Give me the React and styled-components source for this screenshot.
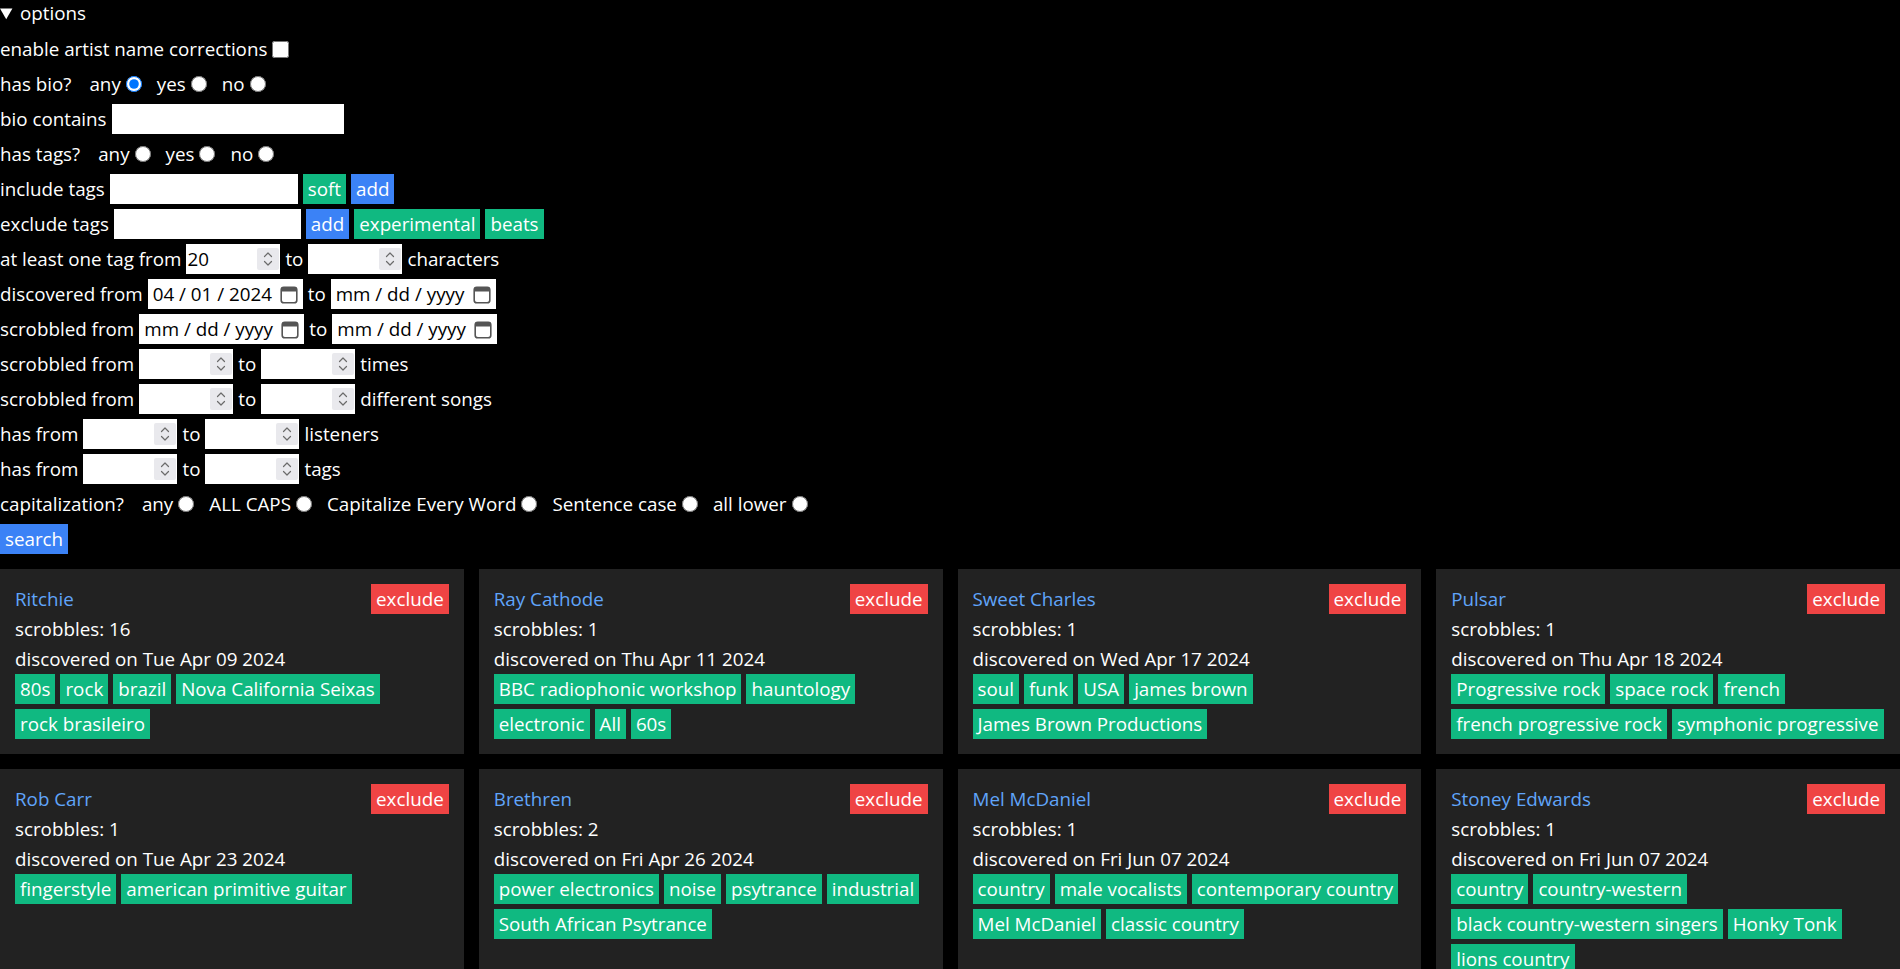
import styled, { createGlobalStyle } from 'styled-components'

const GlobalStyle = createGlobalStyle`
  html, body {
    margin: 0;
    padding: 0;
    background: #000;
  }
  body {
    color: #fff;
    font-family: "Open Sans", "Noto Sans", sans-serif;
    font-size: 18.8px;
  }
  * {
    box-sizing: border-box;
  }
`

const tones = {
  green: '#10b981',
  blue: '#3b82f6',
  red: '#ef4444',
}

const Options = styled.details`
  margin: 0;
`

const Summary = styled.summary`
  height: 29px;
  line-height: 27px;
  cursor: pointer;
`

const Form = styled.div`
  display: flex;
  flex-direction: column;
  gap: 5px;
  padding-top: 5px;
`

const Row = styled.div`
  display: flex;
  align-items: center;
  gap: 5px;
  height: 30px;
  white-space: nowrap;
`

const Question = styled.span`
  margin-right: 3px;
`

const Choice = styled.label`
  display: flex;
  align-items: center;
  gap: 5px;
  margin-left: 10px;
`

const Radio = styled.input.attrs({ type: 'radio' })`
  width: 16px;
  height: 16px;
  margin: 0;
`

const Checkbox = styled.input.attrs({ type: 'checkbox' })`
  width: 17px;
  height: 17px;
  margin: 0;
`

const TextInput = styled.input`
  width: ${p => p.$w}px;
  height: 30px;
  border: 0;
  padding: 1px 3px;
  font: inherit;
  color: #000;
  background: #fff;
  outline: none;
`

const FieldBox = styled.span`
  display: inline-flex;
  align-items: center;
  width: ${p => p.$w}px;
  height: 30px;
  background: #fff;
  padding: ${p => p.$pad};
  gap: 4px;
`

const NumberInput = styled.input.attrs({ type: 'number' })`
  flex: 1;
  min-width: 0;
  height: 100%;
  border: 0;
  padding: 0;
  font: inherit;
  color: #000;
  background: transparent;
  outline: none;
  -moz-appearance: textfield;

  &::-webkit-inner-spin-button,
  &::-webkit-outer-spin-button {
    -webkit-appearance: none;
    margin: 0;
  }
`

const Spinner = styled.span`
  width: 22px;
  height: 22px;
  flex: none;
  border-radius: 2px;
  background: #e9e9ed;
  display: flex;
  align-items: center;
  justify-content: center;
`

const DateText = styled.input`
  flex: 1;
  min-width: 0;
  height: 100%;
  border: 0;
  padding: 0;
  font: inherit;
  color: #000;
  background: transparent;
  outline: none;
`

const Chip = styled.button`
  height: 30px;
  padding: 0 5px;
  border: 0;
  font: inherit;
  line-height: 30px;
  color: #fff;
  background: ${p => tones[p.$tone]};
  cursor: pointer;
`

const Grid = styled.div`
  display: grid;
  grid-template-columns: repeat(4, 1fr);
  gap: 15px;
  margin-top: 15px;
`

const Card = styled.div`
  background: #222;
  padding: 15px;
  display: flex;
  flex-direction: column;
`

const CardHead = styled.div`
  display: flex;
  align-items: center;
  justify-content: space-between;
  height: 30px;
`

const ArtistLink = styled.a`
  color: #60a5fa;
  text-decoration: none;
  line-height: 30px;
`

const Line = styled.div`
  line-height: 30px;
`

const Tags = styled.div`
  display: flex;
  flex-wrap: wrap;
  gap: 5px;
`

const Tag = styled.span`
  height: 30px;
  padding: 0 5px;
  line-height: 30px;
  background: #10b981;
  color: #fff;
  white-space: nowrap;
`

const artists = [
  { name: 'Ritchie', scrobbles: 16, date: 'Tue Apr 09 2024', tags: ['80s', 'rock', 'brazil', 'Nova California Seixas', 'rock brasileiro'] },
  { name: 'Ray Cathode', scrobbles: 1, date: 'Thu Apr 11 2024', tags: ['BBC radiophonic workshop', 'hauntology', 'electronic', 'All', '60s'] },
  { name: 'Sweet Charles', scrobbles: 1, date: 'Wed Apr 17 2024', tags: ['soul', 'funk', 'USA', 'james brown', 'James Brown Productions'] },
  { name: 'Pulsar', scrobbles: 1, date: 'Thu Apr 18 2024', tags: ['Progressive rock', 'space rock', 'french', 'french progressive rock', 'symphonic progressive'] },
  { name: 'Rob Carr', scrobbles: 1, date: 'Tue Apr 23 2024', tags: ['fingerstyle', 'american primitive guitar'] },
  { name: 'Brethren', scrobbles: 2, date: 'Fri Apr 26 2024', tags: ['power electronics', 'noise', 'psytrance', 'industrial', 'South African Psytrance'] },
  { name: 'Mel McDaniel', scrobbles: 1, date: 'Fri Jun 07 2024', tags: ['country', 'male vocalists', 'contemporary country', 'Mel McDaniel', 'classic country'] },
  { name: 'Stoney Edwards', scrobbles: 1, date: 'Fri Jun 07 2024', tags: ['country', 'country-western', 'black country-western singers', 'Honky Tonk', 'lions country'] },
]

const SpinIcon = () => (
  <svg width="10" height="16" viewBox="0 0 10 16" fill="none" stroke="#6b6b6b" strokeWidth="1.2" strokeLinecap="round" strokeLinejoin="round">
    <path d="M1.5 5.5 L5 2 L8.5 5.5" />
    <path d="M1.5 10.5 L5 14 L8.5 10.5" />
  </svg>
)

const CalendarIcon = () => (
  <svg width="18" height="20" viewBox="0 0 18 20" style={{ flex: 'none' }}>
    <rect x="1.2" y="3.2" width="15.6" height="15.6" rx="2.6" fill="none" stroke="#555" strokeWidth="1.6" />
    <path d="M1.2 5.8 A2.6 2.6 0 0 1 3.8 3.2 H14.2 A2.6 2.6 0 0 1 16.8 5.8 V7.6 H1.2 Z" fill="#555" />
  </svg>
)

const NumberField = ({ value }) => (
  <FieldBox $w={94} $pad="0 1px 0 1px">
    <NumberInput defaultValue={value} />
    <Spinner><SpinIcon /></Spinner>
  </FieldBox>
)

const DateField = ({ value, w }) => (
  <FieldBox $w={w} $pad="0 5px 0 5px">
    <DateText defaultValue={value} readOnly />
    <CalendarIcon />
  </FieldBox>
)

const RadioRow = ({ title, name, choices, checked }) => (
  <Row>
    <Question>{title}</Question>
    {choices.map(c => (
      <Choice key={c}>
        {c}
        <Radio name={name} defaultChecked={c === checked} />
      </Choice>
    ))}
  </Row>
)

const ArtistCard = ({ artist }) => (
  <Card>
    <CardHead>
      <ArtistLink href="#">{artist.name}</ArtistLink>
      <Chip $tone="red">exclude</Chip>
    </CardHead>
    <Line>scrobbles: {artist.scrobbles}</Line>
    <Line>discovered on {artist.date}</Line>
    <Tags>
      {artist.tags.map(t => <Tag key={t}>{t}</Tag>)}
    </Tags>
  </Card>
)

const App = () => {
  return (
    <>
      <GlobalStyle />
      <Options open>
        <Summary>options</Summary>
        <Form>
          <Row>
            enable artist name corrections
            <Checkbox />
          </Row>
          <RadioRow title="has bio?" name="bio" choices={['any', 'yes', 'no']} checked="any" />
          <Row>
            bio contains
            <TextInput $w={232} />
          </Row>
          <RadioRow title="has tags?" name="tags" choices={['any', 'yes', 'no']} />
          <Row>
            include tags
            <TextInput $w={188} />
            <Chip $tone="green">soft</Chip>
            <Chip $tone="blue">add</Chip>
          </Row>
          <Row>
            exclude tags
            <TextInput $w={187} />
            <Chip $tone="blue">add</Chip>
            <Chip $tone="green">experimental</Chip>
            <Chip $tone="green">beats</Chip>
          </Row>
          <Row>
            at least one tag from
            <NumberField value="20" />
            to
            <NumberField />
            characters
          </Row>
          <Row>
            discovered from
            <DateField value="04 / 01 / 2024" w={155} />
            to
            <DateField value="mm / dd / yyyy" w={165} />
          </Row>
          <Row>
            scrobbled from
            <DateField value="mm / dd / yyyy" w={165} />
            to
            <DateField value="mm / dd / yyyy" w={165} />
          </Row>
          <Row>
            scrobbled from
            <NumberField />
            to
            <NumberField />
            times
          </Row>
          <Row>
            scrobbled from
            <NumberField />
            to
            <NumberField />
            different songs
          </Row>
          <Row>
            has from
            <NumberField />
            to
            <NumberField />
            listeners
          </Row>
          <Row>
            has from
            <NumberField />
            to
            <NumberField />
            tags
          </Row>
          <RadioRow
            title="capitalization?"
            name="caps"
            choices={['any', 'ALL CAPS', 'Capitalize Every Word', 'Sentence case', 'all lower']}
          />
          <Row>
            <Chip $tone="blue">search</Chip>
          </Row>
        </Form>
      </Options>
      <Grid>
        {artists.map(a => <ArtistCard key={a.name} artist={a} />)}
      </Grid>
    </>
  )
}

export default App
